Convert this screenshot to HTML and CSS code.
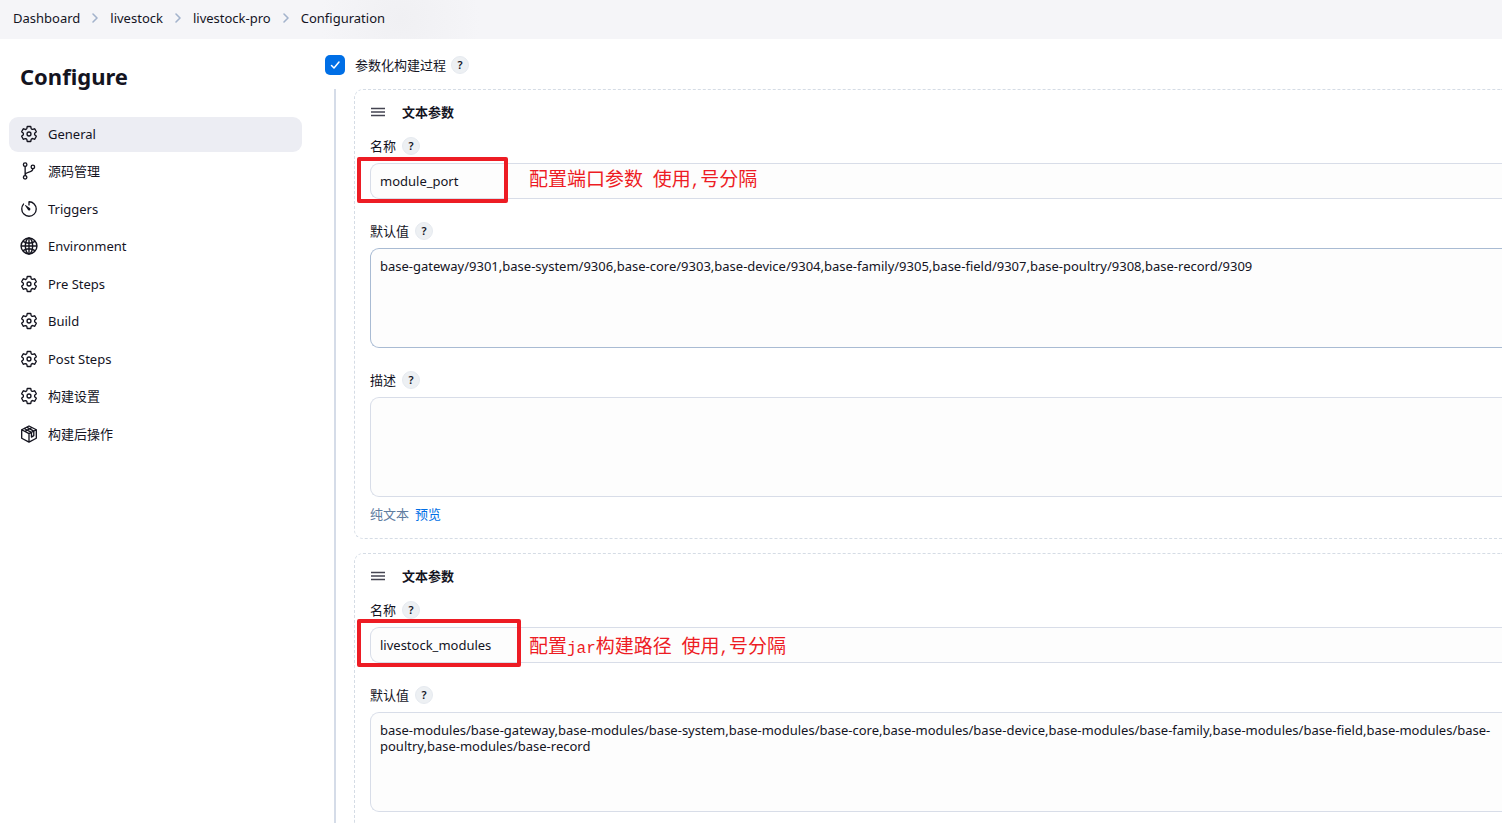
FILE: index.html
```html
<!DOCTYPE html>
<html lang="zh-CN">
<head>
<meta charset="utf-8">
<title>Configuration</title>
<link rel="stylesheet" href="styles.css">
</head>
<body>
<svg class="sprite" aria-hidden="true">
  <symbol id="gear" viewBox="0 0 512 512"><g fill="none" stroke="currentColor" stroke-width="38" stroke-linejoin="round"><circle cx="256" cy="256" r="56"/><path d="M416.39 256a154.34 154.34 0 01-1.53 20.79l45.21 35.46a10.81 10.81 0 012.45 13.75l-42.77 74a10.81 10.81 0 01-13.14 4.59l-44.9-18.08a16.11 16.11 0 00-15.17 1.75A164.48 164.48 0 01325 400.8a15.94 15.94 0 00-8.82 12.14l-6.73 47.89a11.08 11.08 0 01-10.68 9.17h-85.54a11.11 11.11 0 01-10.69-8.87l-6.72-47.82a16.07 16.07 0 00-9-12.22 155.3 155.3 0 01-21.46-12.57 16 16 0 00-15.11-1.71l-44.89 18.07a10.81 10.81 0 01-13.14-4.58l-42.77-74a10.8 10.8 0 012.45-13.75l38.21-30a16.05 16.05 0 006-14.08c-.36-4.17-.58-8.33-.58-12.5s.21-8.27.58-12.35a16 16 0 00-6.07-13.94l-38.19-30A10.81 10.81 0 0149.48 186l42.77-74a10.81 10.81 0 0113.14-4.59l44.9 18.08a16.11 16.11 0 0015.17-1.75A164.48 164.48 0 01187 111.2a15.94 15.94 0 008.82-12.14l6.73-47.89A11.08 11.08 0 01213.23 42h85.54a11.11 11.11 0 0110.69 8.87l6.72 47.82a16.07 16.07 0 009 12.22 155.3 155.3 0 0121.46 12.57 16 16 0 0015.11 1.71l44.89-18.07a10.81 10.81 0 0113.14 4.58l42.77 74a10.8 10.8 0 01-2.45 13.75l-38.21 30a16.05 16.05 0 00-6.05 14.08c.33 4.14.55 8.3.55 12.47z"/></g></symbol>
  <symbol id="branch" viewBox="0 0 512 512"><g fill="none" stroke="currentColor" stroke-width="38" stroke-linecap="round"><circle cx="146" cy="76" r="50"/><circle cx="146" cy="436" r="50"/><circle cx="366" cy="140" r="50"/><path d="M146 386V126M366 190c0 132-220 60-220 190"/></g></symbol>
  <symbol id="timer" viewBox="0 0 512 512"><path fill="none" stroke="currentColor" stroke-width="38" stroke-linecap="round" stroke-linejoin="round" d="M100 116A206 206 0 0050 254c-1 114 92 207 206 208 114 0 206-92 206-206 0-112-90-204-202-206a4 4 0 00-4 4V140"/><path fill="currentColor" d="M229 282l-86-123a10 10 0 0114-14l123 86a36 36 0 01-42 60 36 36 0 01-9-9z"/></symbol>
  <symbol id="globe" viewBox="0 0 512 512"><g fill="none" stroke="currentColor" stroke-width="40"><circle cx="256" cy="256" r="226"/><ellipse cx="256" cy="256" rx="104" ry="226"/><path d="M256 30v452M30 256h452M84 122c100 62 244 62 344 0M84 390c100-62 244-62 344 0"/></g></symbol>
  <symbol id="package" viewBox="0 0 512 512"><g fill="none" stroke="currentColor" stroke-width="38" stroke-linejoin="round" stroke-linecap="round"><path d="M256 28L464 136V376L256 488 48 376V136zM48 136L256 246 464 136M256 246V488M120 100L326 208V344L392 304V174L190 62M150 176L330 78"/></g></symbol>
  <symbol id="chevron" viewBox="0 0 8 12"><path d="M2 2l4 4-4 4" fill="none" stroke="currentColor" stroke-width="1.6" stroke-linecap="round" stroke-linejoin="round"/></symbol>
  <symbol id="grip" viewBox="0 0 14 10"><path d="M0 1.5h14M0 5h14M0 8.5h14" stroke="currentColor" stroke-width="1.4"/></symbol>
</svg>

<nav class="breadcrumbs" aria-label="breadcrumbs">
  <a href="#">Dashboard</a><svg><use href="#chevron"/></svg>
  <a href="#">livestock</a><svg><use href="#chevron"/></svg>
  <a href="#">livestock-pro</a><svg><use href="#chevron"/></svg>
  <a href="#">Configuration</a>
</nav>

<div class="page">
  <aside class="sidebar">
    <h1>Configure</h1>
    <nav class="tasks">
      <a class="task active" href="#"><svg><use href="#gear"/></svg>General</a>
      <a class="task" href="#"><svg><use href="#branch"/></svg>源码管理</a>
      <a class="task" href="#"><svg><use href="#timer"/></svg>Triggers</a>
      <a class="task" href="#"><svg><use href="#globe"/></svg>Environment</a>
      <a class="task" href="#"><svg><use href="#gear"/></svg>Pre Steps</a>
      <a class="task" href="#"><svg><use href="#gear"/></svg>Build</a>
      <a class="task" href="#"><svg><use href="#gear"/></svg>Post Steps</a>
      <a class="task" href="#"><svg><use href="#gear"/></svg>构建设置</a>
      <a class="task" href="#"><svg><use href="#package"/></svg>构建后操作</a>
    </nav>
  </aside>

  <main class="content">
    <div class="toggle">
      <input type="checkbox" id="parameterized" checked>
      <label for="parameterized">参数化构建过程</label>
      <button class="help" type="button">?</button>
    </div>

    <div class="parameters">
      <section class="card">
        <h2><svg><use href="#grip"/></svg>文本参数</h2>
        <div class="field">
          <div class="caption"><label for="name1">名称</label><button class="help" type="button">?</button></div>
          <div class="control">
            <input type="text" id="name1" value="module_port">
            <div class="mark mark-port"></div>
            <p class="note note-port">配置端口参数<span> </span>使用<span>,</span>号分隔</p>
          </div>
        </div>
        <div class="field">
          <div class="caption"><label for="value1">默认值</label><button class="help" type="button">?</button></div>
          <textarea class="hovered" id="value1">base-gateway/9301,base-system/9306,base-core/9303,base-device/9304,base-family/9305,base-field/9307,base-poultry/9308,base-record/9309</textarea>
        </div>
        <div class="field">
          <div class="caption"><label for="desc1">描述</label><button class="help" type="button">?</button></div>
          <textarea id="desc1"></textarea>
          <div class="preview"><span>纯文本</span><a href="#">预览</a></div>
        </div>
      </section>

      <section class="card">
        <h2><svg><use href="#grip"/></svg>文本参数</h2>
        <div class="field">
          <div class="caption"><label for="name2">名称</label><button class="help" type="button">?</button></div>
          <div class="control">
            <input type="text" id="name2" value="livestock_modules">
            <div class="mark mark-modules"></div>
            <p class="note note-modules">配置<span>jar</span>构建路径<span> </span>使用<span>,</span>号分隔</p>
          </div>
        </div>
        <div class="field">
          <div class="caption"><label for="value2">默认值</label><button class="help" type="button">?</button></div>
          <textarea id="value2">base-modules/base-gateway,base-modules/base-system,base-modules/base-core,base-modules/base-device,base-modules/base-family,base-modules/base-field,base-modules/base-poultry,base-modules/base-record</textarea>
        </div>
      </section>
    </div>
  </main>
</div>
</body>
</html>
```

FILE: styles.css
```css
* { box-sizing: border-box; }

body {
  margin: 0;
  height: 100vh;
  overflow: hidden;
  display: flex;
  flex-direction: column;
  background: #fff;
  color: #14141f;
  font: 13px/20px "Noto Sans", "Noto Sans CJK SC", sans-serif;
}

a { color: inherit; text-decoration: none; }
.sprite { display: none; }

.breadcrumbs {
  flex: none;
  display: flex;
  align-items: center;
  gap: 11px;
  height: 39px;
  padding: 0 13px 3px;
  background: radial-gradient(circle at 400px 20px, #f0f0f3, #f5f5f8 80px);
}
.breadcrumbs svg { width: 8px; height: 12px; color: #a3b3cc; }

.page { flex: 1; min-height: 0; display: flex; }

.sidebar { flex: none; width: 302px; padding: 21px 0 0 9px; }
.sidebar h1 { margin: 0 0 25px 11px; font-size: 22px; line-height: 32px; }
.tasks { display: flex; flex-direction: column; justify-content: space-between; height: 335px; }
.task {
  display: flex;
  align-items: center;
  gap: 10px;
  height: 35px;
  padding: 0 11px 2px;
  border-radius: 9px;
}
.task.active { background: #ecedf3; }
.task svg { width: 18px; height: 18px; }

.content { flex: 1; min-width: 0; padding: 16px 0 0 23px; }

.toggle { display: flex; align-items: center; gap: 10px; margin-bottom: 14px; }
.toggle .help { margin-left: -5px; }
.toggle input {
  appearance: none;
  width: 20px;
  height: 20px;
  margin: 0;
  border-radius: 5px;
  background: #006fe6 url("data:image/svg+xml,%3Csvg xmlns='http://www.w3.org/2000/svg' viewBox='0 0 20 20'%3E%3Cpath d='M6.5 10.5l2.5 2.5 5-6' fill='none' stroke='white' stroke-width='1.5' stroke-linecap='round' stroke-linejoin='round'/%3E%3C/svg%3E");
}

.help {
  width: 18px;
  height: 18px;
  padding: 0;
  border: 1px solid #e6eaf0;
  border-radius: 50%;
  background: #edf0f3;
  color: #14141f;
  font: 600 11px/16px "Noto Sans", sans-serif;
}

.parameters {
  display: flex;
  flex-direction: column;
  gap: 14px;
  margin-left: 9px;
  padding-left: 18px;
  border-left: 2px solid #d5dce8;
}

.card {
  display: flex;
  flex-direction: column;
  gap: 22px;
  min-height: 450px;
  padding: 12px 0 14px 15px;
  border: 1px dashed #d5dce5;
  border-right: 0;
  border-radius: 9px 0 0 9px;
}
.card h2 {
  display: flex;
  align-items: center;
  gap: 17px;
  margin: 0 0 -8px 1px;
  font-size: 13px;
  line-height: 20px;
}
.card h2 svg { width: 14px; height: 10px; color: #444451; }

.caption { display: flex; align-items: center; gap: 6px; margin-bottom: 7px; }

.control { position: relative; }

input[type="text"], textarea {
  display: block;
  width: 100%;
  margin: 0;
  border: 1px solid #d8dde8;
  border-right: 0;
  border-radius: 9px 0 0 9px;
  background: #fdfdfd;
  color: inherit;
  font: inherit;
}
input[type="text"] { height: 36px; padding: 0 9px; }
textarea { height: 100px; padding: 9px; line-height: 16px; resize: none; overflow: hidden; }
textarea.hovered { border-color: #a9bbd3; }

.preview { display: flex; gap: 6px; margin-top: 7px; color: #607c9f; }
.preview a { color: #006fe6; }

.mark { position: absolute; border: 4px solid #ed1c24; border-radius: 2px; }
.mark-port { left: -13px; top: -6px; width: 151px; height: 46px; }
.mark-modules { left: -13px; top: -8px; width: 164px; height: 48px; }

.note {
  position: absolute;
  left: 159px;
  margin: 0;
  color: #ed1c24;
  font: 19px/30px "Noto Sans CJK SC", sans-serif;
  white-space: pre;
}
.note span { font: 16px/20px "Liberation Mono", monospace; }
.note-port { top: 0; }
.note-modules { top: 3px; }
```
